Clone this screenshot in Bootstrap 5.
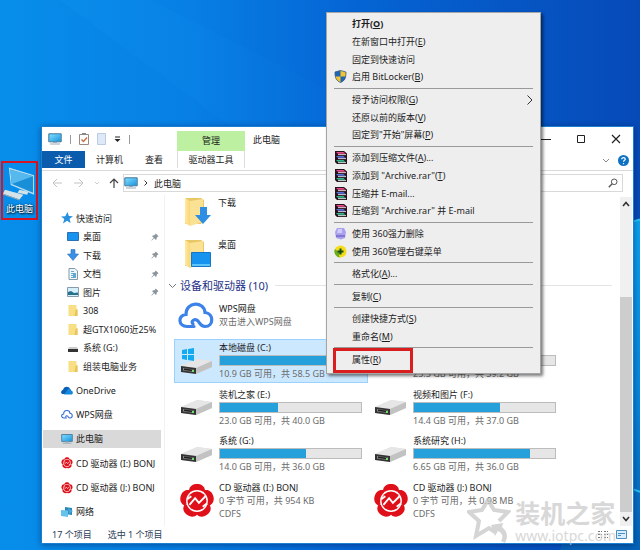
<!DOCTYPE html>
<html lang="zh-CN">
<head>
<meta charset="utf-8">
<meta name="viewport" content="width=device-width, initial-scale=1">
<title>此电脑</title>
<link href="https://cdn.jsdelivr.net/npm/bootstrap@5.3.0/dist/css/bootstrap.min.css" rel="stylesheet">
<style>
body{font-family:"Noto Sans","Noto Sans CJK SC",sans-serif;font-size:9px;line-height:13px;color:#1c1c1c;background:#0874d8;min-height:100vh}
button,input{font:inherit;color:inherit;border:0;background:none;padding:0}
a{color:inherit;text-decoration:none}
svg{display:block;flex:none}
.wallpaper{inset:0;width:100%;height:100%}
.shortcut{left:1px;top:161px;width:37px;border:2px solid #d51426;padding:4px 0 3px;color:#fff;text-shadow:1px 1px 2px #000,0 0 2px #0009}
.explorer{margin:126px 6px 7px 41px;border:1px solid #1a80cf;background:#fff;box-shadow:0 1px 6px #0036}
.titlebar{height:24px}
.quick{width:135px;gap:8px;padding-left:6px}
.quick-line{width:1px;height:9px;background:#999}
.tool-tab{width:68px;text-align:center}
.tool-head{background:#bdf0a0;height:20px;line-height:19px;margin-top:4px}
.window-buttons{gap:25px;padding-right:12px}
.ribbon{height:20px;border-bottom:1px solid #dadada}
.file-tab{background:#0c5cad;color:#fff;width:43px;height:17px}
.tab-pair{width:92px;padding:0 14px 0 11px}
.tool-name{border:solid #ddd;border-width:0 1px;height:17px;line-height:17px}
.address-row{height:24px;padding:3px 10px 3px 9px}
.box{border:1px solid #d9d9d9;height:18px}
.address{gap:6px}
.search{width:110px;margin-left:5px}
.search input{min-width:0}
.pane{height:331px}
.side{width:123px;padding-top:14px;border-right:1px solid #f2f2f2}
.quick-list{height:166px}
.root-list{height:140px;margin-top:6px}
.side a{display:flex;align-items:center;height:18px;padding-left:18px;gap:3px;margin:0 3px 0 1px;white-space:nowrap;overflow:hidden}
.side .sub{padding-left:24px;gap:4px}
.side .current{background:#d9d9d9}
.pin{margin-left:auto;margin-right:2px}
.folder{height:42px;padding-left:18px;padding-top:1px;gap:7px}
.folder svg{margin-top:1px}
.group-title{font-size:11px;line-height:13px;color:#1e3287;gap:3px;padding-left:3px}
.group-title::after{content:"";flex:1;height:1px;background:#e4e4e4;margin:0 8px 0 4px}
.wps{height:45px;padding:10px 0 0 13px;gap:5px}
.drives{display:grid;grid-template-columns:repeat(2,194px);grid-auto-rows:1fr;height:187px;padding-left:9px}
.drive{display:flex;align-items:center;padding-left:5px;gap:5px;border:1px solid transparent;white-space:nowrap}
.drive.selected{background:#cce8ff;border-color:#99d1ff;margin:2px 0 1px}
.disc{margin:0 -1px}
.drive-info{width:143px;flex:none}
.meter{height:11px;margin:1px 0;border:1px solid #bcbcbc;border-radius:0;background:#e6e6e6}
.meter .progress-bar{background:#26a0da}
.muted{color:#6b6b6b}
.scroll{width:12px;margin:2px 1px 0 0;background:#f0f0f0}
.thumb{background:#cdcdcd;height:215px}
.status{height:17px;padding:0 6px 0 10px;color:#2b3d56}
.menu{left:326px;top:12px;width:215px;min-height:362px;padding:2px 7px 5px;background:#eee;border:1px solid #a5a5a5;box-shadow:2px 2px 3px #0008;z-index:3}
.menu button{flex:18 1 0;display:flex;align-items:center;text-align:left;gap:5px;line-height:13px;white-space:nowrap}
.menu button .ico{width:13px;height:13px;flex:none}
.menu hr{flex:5 1 0;margin:0;border:0;opacity:1;background:linear-gradient(#999,#999) center/100% 1px no-repeat}
.target::after{content:"";position:absolute;left:-1px;top:-2px;width:80px;height:25px;border:3px solid #d81e1e}
.watermark{right:24px;bottom:7px;color:#c8c8c8;opacity:.7;z-index:2;pointer-events:none}
.mark-name{font-size:25px;line-height:29px;font-weight:700}
.mark-url{font-size:14px;line-height:15px}
</style>
<script src="https://cdn.jsdelivr.net/npm/bootstrap@5.3.0/dist/js/bootstrap.bundle.min.js"></script>
</head>
<body class="position-relative overflow-hidden">
<svg class="wallpaper position-absolute" viewBox="0 0 640 550" preserveAspectRatio="none" aria-hidden="true">
<defs>
<linearGradient id="sky"><stop offset="0" stop-color="#078eea"/><stop offset=".3" stop-color="#077fe4"/><stop offset=".55" stop-color="#0565d4"/><stop offset="1" stop-color="#064ab8"/></linearGradient>
<linearGradient id="low" x2="0" y2="1"><stop offset="0" stop-color="#0aa0ee"/><stop offset=".5" stop-color="#0788de"/><stop offset="1" stop-color="#0562b8"/></linearGradient>
<linearGradient id="beam"><stop offset="0" stop-color="#18a0f5" stop-opacity=".12"/><stop offset="1" stop-color="#18a0f5" stop-opacity="0"/></linearGradient>
</defs>
<path fill="url(#sky)" d="M0 0h640v550H0z"/>
<path fill="url(#beam)" d="M150 0L400 126H230L60 0z"/>
<path fill="url(#low)" d="M630 222l10-3v331H560z"/>
<path stroke="#25c5f5" stroke-width="2" d="M630 222l10-3M632 488l8 3"/>
</svg>

<svg width="0" height="0" class="position-absolute" aria-hidden="true">
<defs>
<linearGradient id="screen" x2="1" y2="1"><stop offset="0" stop-color="#7fdcff"/><stop offset="1" stop-color="#1c95dc"/></linearGradient>
<linearGradient id="foldface"><stop offset="0" stop-color="#ffe9a3"/><stop offset="1" stop-color="#f8d775"/></linearGradient>
</defs>
<symbol id="pc" viewBox="0 0 14 12"><path fill="#37aee8" stroke="#4a7795" d="M.8.8h12.4v8H.8z"/><path fill="url(#screen)" d="M1.500 1.500h11v6.700h-11z"/><path fill="#9ab" d="M5 9h4v1H5zM2 10.500h10v1H2z"/></symbol>
<symbol id="pinned" viewBox="0 0 9 9"><path fill="#8a949c" d="M5.300 .5l3.200 3.200-1 .5-1 1-.3 2-1 .4L3.600 5.900 1 8.400l-.5.1.1-.5 2.500-2.600L1.400 3.800l.4-1 2-.3 1-1z"/></symbol>
<symbol id="smallfolder" viewBox="0 0 11 13"><path fill="#f8df83" d="M1 1h8v4l1 1v6H1z"/><path fill="#e7c45c" d="M8 6l2-1v7H7z"/></symbol>
<symbol id="disk" viewBox="0 0 34 20"><path fill="#dcdcdc" d="M1 10L17 3l15 2v6l-16 7-15-2z"/><path fill="#e6e6e6" d="M1 10L17 3l15 2-16 7z"/><path fill="#c2c2c2" d="M16 12l16-7v6l-16 7z"/><path fill="#343434" d="M1 10l15 2v6L1 16z"/><path fill="#8a8a8a" d="M3 12l11 1.500v2.500L3 14.500z"/><path fill="#1e1e1e" d="M4 12.500l9 1.200v1.600l-9-1.200z"/><path fill="#6fe06a" d="M12 14h2v2h-2z"/></symbol>
<symbol id="rose" viewBox="0 0 38 38"><g fill="#df1019"><path id="petal" d="M10.500 8C11 3 15 1 19 1s8 2 8.500 7c-3 4-14 4-17 0z"/><use href="#petal" transform="rotate(72 19 19)"/><use href="#petal" transform="rotate(144 19 19)"/><use href="#petal" transform="rotate(216 19 19)"/><use href="#petal" transform="rotate(288 19 19)"/></g><circle cx="19" cy="19" r="11.500" fill="#fff"/><circle cx="19" cy="19" r="10" fill="#df1019"/><path fill="none" stroke="#fff" stroke-width="2" d="M11 23l6-7 4 5 7-7M9 17l4-3M25 25l4-3"/></symbol>
<symbol id="cloud" viewBox="0 0 36 28"><path fill="none" stroke="currentColor" stroke-width="3.200" stroke-linecap="round" d="M16 24.500H9C0 24.500-.5 13 8 12.500 8-1 26-1 27 10.500c9 1 9 14 0 14-4 0-5-3-7-5.500-3-3-8 0-5 3"/></symbol>
<symbol id="books" viewBox="0 0 13 13"><path fill="#28111d" d="M1 0h9l3 2.500V13H3l-2-2z"/><path fill="#e64b8c" d="M2 1h7.500l2 1.800H4z"/><path fill="#f4dce6" d="M4 3.200h8v.9H4z"/><path fill="#5570d8" d="M2 5h7.500l2 1.800H4z"/><path fill="#dce4f8" d="M4 7.200h8v.9H4z"/><path fill="#30b88c" d="M2 9h7.500l2 1.800H4z"/><path fill="#daf4ea" d="M4 11.200h8v.9H4z"/></symbol>
<symbol id="bigfolder" viewBox="0 0 30 30"><path fill="#e9c766" d="M2 1h16l3 2v20l-3 4H2z"/><path fill="url(#foldface)" d="M2 1l5 3v25l-5-3z"/><path fill="#fbe194" d="M7 4l13-2v23L7 29z"/></symbol>
</svg>

<a href="#" class="shortcut position-absolute d-flex flex-column align-items-center">
<svg width="33" height="35" viewBox="0 0 34 35"><path fill="#b9dff2" d="M6 0l26 8v20L8 18z"/><path fill="#198fd8" d="M7.500 2L31 9v17L9 17z"/><path fill="#55b9ee" d="M7.500 2L31 9 9 17z"/><path fill="#d5e2e8" d="M17 23l9 2-1 3-10-2zM2 23l19 5-4 5L0 27z"/><path fill="#97a7ae" d="M0 27l17 6v1L0 28z"/></svg>
<span>此电脑</span></a>

<main class="explorer position-relative">
<header class="titlebar d-flex align-items-start">
<div class="quick d-flex align-items-center h-100">
<svg width="14" height="12"><use href="#pc"/></svg><span class="quick-line"></span>
<svg width="10" height="12" viewBox="0 0 10 12"><path fill="#fff" stroke="#9a8a80" d="M.5 1.500h9v10h-9z"/><path fill="#888" d="M3 0h4v2H3z"/><path fill="none" stroke="#c66a3c" stroke-width="1.300" d="M2.500 6.500l2 2 3.500-4"/></svg>
<svg width="9" height="12" viewBox="0 0 9 12"><path fill="#dfe8f7" stroke="#bccbe4" d="M.5.5h8v11h-8z"/></svg>
<svg width="7" height="7" viewBox="0 0 7 7"><path stroke="#222" d="M1 1h5"/><path fill="#222" d="M.5 3h6l-3 3z"/></svg><span class="quick-line"></span>
</div>
<div class="tool-tab tool-head">管理</div>
<div class="align-self-center ps-2">此电脑</div>
<div class="window-buttons d-flex align-items-center h-100 ms-auto">
<button aria-label="最小化"><svg width="10" height="10" viewBox="0 0 10 10"><path stroke="#222" d="M0 5.500h10"/></svg></button>
<button aria-label="最大化"><svg width="10" height="10" viewBox="0 0 10 10"><path fill="none" stroke="#222" d="M1.500 1.500h7v7h-7z"/></svg></button>
<button aria-label="关闭"><svg width="10" height="10" viewBox="0 0 10 10"><path stroke="#222" stroke-width="1.200" d="M1 1l8 8M9 1L1 9"/></svg></button>
</div>
</header>
<nav class="ribbon d-flex align-items-start" aria-label="功能区">
<button class="file-tab">文件</button>
<div class="tab-pair d-flex justify-content-between"><button class="pt-1 lh-1">计算机</button><button class="pt-1 lh-1">查看</button></div>
<button class="tool-tab tool-name">驱动器工具</button>
<div class="ms-auto d-flex align-items-center gap-2 h-100 pe-1">
<svg width="8" height="6" viewBox="0 0 8 6"><path fill="none" stroke="#888" d="M1 1l3 3 3-3"/></svg>
<button aria-label="帮助"><svg width="11" height="11" viewBox="0 0 11 11"><circle cx="5.500" cy="5.500" r="5.500" fill="#0d72c4"/><path fill="none" stroke="#fff" stroke-width="1.200" d="M3.700 4.200c0-2.200 3.600-2 3.600 0 0 1-1.800 1.300-1.800 2.600M5.500 8v1.200"/></svg></button>
</div>
</nav>
<div class="address-row d-flex align-items-center">
<div class="d-flex align-items-center gap-2 flex-shrink-0">
<svg width="12" height="10" viewBox="0 0 12 10"><path fill="none" stroke="#c4c4c4" d="M11 5H2M6 1L2 5l4 4"/></svg>
<svg width="14" height="10" viewBox="0 0 14 10"><path fill="none" stroke="#c4c4c4" d="M3 5h9M8 1l4 4-4 4"/></svg>
<svg width="8" height="5" viewBox="0 0 8 5"><path fill="none" stroke="#ccc" d="M2 1l2 2 2-2"/></svg>
<svg width="10" height="10" viewBox="0 0 10 10"><path fill="none" stroke="#444" stroke-width="1.200" d="M5 10V1M1 5l4-4 4 4"/></svg>
</div>
<div class="box address d-flex align-items-center flex-grow-1 ms-1">
<svg width="14" height="12"><use href="#pc"/></svg>
<svg width="4" height="6" viewBox="0 0 4 6"><path fill="none" stroke="#333" d="M.5.5L3 3 .5 5.500"/></svg>
<a href="#">此电脑</a></div>
<label class="box search d-flex align-items-center pe-1"><input class="flex-grow-1" type="search" aria-label="搜索此电脑"><svg width="10" height="10" viewBox="0 0 10 10"><circle cx="6.200" cy="3.800" r="2.800" fill="none" stroke="#555"/><path stroke="#555" stroke-width="1.400" d="M4.200 5.800L.8 9.200"/></svg></label>
</div>
<div class="pane d-flex">
<nav class="side flex-shrink-0" aria-label="导航窗格">
<div class="quick-list d-flex flex-column justify-content-between">
<a href="#"><svg width="12" height="12" viewBox="0 0 12 12"><path fill="#2790df" d="M6.500 0l1.300 4 4.200.3-3.400 2.500 1 4.200L6 8.800 2 11.500l1.300-4.400L0 4.600l4.300-.3z"/></svg>快速访问</a>
<a href="#" class="sub"><svg width="12" height="10" viewBox="0 0 12 10"><path fill="#1593ef" stroke="#2a70b4" d="M.5.5h11v8H.5z"/></svg>桌面<svg class="pin" width="8" height="8"><use href="#pinned"/></svg></a>
<a href="#" class="sub"><svg width="12" height="12" viewBox="0 0 12 12"><path fill="#3a90e4" stroke="#2870bf" stroke-width=".6" d="M4 .5h4V5h3.500L6 11.500.5 5H4z"/></svg>下载<svg class="pin" width="8" height="8"><use href="#pinned"/></svg></a>
<a href="#" class="sub"><svg width="12" height="12" viewBox="0 0 12 12"><path fill="#f0f7fb" stroke="#8199aa" d="M2 .5h6l2.500 2.500v8.500H2z"/><path stroke="#65a8d0" d="M4 3.500h3M4 5.500h5M4 7.500h5M4 9.500h5"/><path fill="#60a8d5" d="M6 5h3v4H6z"/></svg>文档<svg class="pin" width="8" height="8"><use href="#pinned"/></svg></a>
<a href="#" class="sub"><svg width="12" height="10" viewBox="0 0 12 10"><path fill="#d5effc" stroke="#879ba8" d="M.5.5h11v9H.5z"/><path fill="#26728b" d="M1 5l3-1 3 2 4-.5V8H1z"/></svg>图片<svg class="pin" width="8" height="8"><use href="#pinned"/></svg></a>
<a href="#" class="sub"><svg width="12" height="13"><use href="#smallfolder"/></svg>308</a>
<a href="#" class="sub"><svg width="12" height="13"><use href="#smallfolder"/></svg>超GTX1060近25%</a>
<a href="#" class="sub"><svg width="12" height="10" viewBox="0 0 12 10"><path fill="#ccc" d="M2 4h8l1 2H1z"/><path fill="#333" d="M1 6h10v3H1z"/></svg>系统 (G:)</a>
<a href="#" class="sub"><svg width="12" height="13"><use href="#smallfolder"/></svg>组装电脑业务</a>
</div>
<div class="root-list d-flex flex-column justify-content-between">
<a href="#"><svg width="12" height="9" viewBox="0 0 12 9"><path fill="#0a5eb5" d="M2 4c.5-4 6-4.500 7-1l-5 5H2C-.5 8-.5 4.500 2 4z"/><path fill="#1489dc" d="M3 8.500L7 3c3-1 3 1 3 1.500 2.500.5 2.500 4 0 4z"/></svg>OneDrive</a>
<a href="#"><svg width="12" height="11" color="#386bd6"><use href="#cloud"/></svg>WPS网盘</a>
<a href="#" class="current"><svg width="12" height="12"><use href="#pc"/></svg>此电脑</a>
<a href="#"><svg width="12" height="12"><use href="#rose"/></svg>CD 驱动器 (I:) BONJ</a>
<a href="#"><svg width="12" height="12"><use href="#rose"/></svg>CD 驱动器 (J:) BONJ</a>
<a href="#"><svg width="12" height="12" viewBox="0 0 12 12"><path fill="#2987b8" d="M4 1l7 1v7l-7-1z"/><path fill="#64c3ec" d="M0 4l7 .5V11l-7-1z"/><path fill="#4aa7d2" d="M7 2l5 3-4 3z"/></svg>网络</a>
</div>
</nav>
<section class="flex-grow-1 overflow-hidden" aria-label="文件">
<div class="folder d-flex align-items-start"><svg width="28" height="30" viewBox="0 0 28 30"><use href="#bigfolder" width="30" height="30"/><path fill="#2d8ee4" d="M17 10h7v8h4l-8 9-8-9h5z"/></svg><a href="#">下载</a></div>
<div class="folder d-flex align-items-start"><svg width="28" height="30" viewBox="0 0 28 30"><use href="#bigfolder" width="30" height="30"/><path fill="#1593ef" stroke="#1376c6" d="M8.500 13.500h19v14h-19z"/><path fill="#5cc4f8" d="M9 25h18v2H9z"/></svg><a href="#">桌面</a></div>
<h2 class="group-title d-flex align-items-center m-0 fw-normal"><svg width="9" height="6" viewBox="0 0 9 6"><path fill="none" stroke="#777" d="M1 1l3.500 3.500L8 1"/></svg>设备和驱动器 (10)</h2>
<div class="wps d-flex"><svg width="36" height="28" color="#3c82e8"><use href="#cloud"/></svg><div><div>WPS网盘</div><div class="muted">双击进入WPS网盘</div></div></div>
<div class="drives">
<div class="drive selected"><svg width="34" height="28" viewBox="0 0 34 28"><use href="#disk" y="9" width="34" height="20"/><path fill="#12aaf0" d="M2 3l5-1v5H2zM8 2l6-1v6H8zM2 8h5v5l-5-1zM8 8h6v6l-6-1z"/></svg><div class="drive-info"><div>本地磁盘 (C:)</div><div class="meter progress"><div class="progress-bar" style="width:81%"></div></div><div class="muted">10.9 GB 可用，共 58.5 GB</div></div></div>
<div class="drive"><svg width="34" height="20"><use href="#disk"/></svg><div class="drive-info"><div>娱乐 (D:)</div><div class="meter progress"><div class="progress-bar" style="width:41%"></div></div><div class="muted">23.3 GB 可用，共 39.2 GB</div></div></div>
<div class="drive"><svg width="34" height="20"><use href="#disk"/></svg><div class="drive-info"><div>装机之家 (E:)</div><div class="meter progress"><div class="progress-bar" style="width:41%"></div></div><div class="muted">23.0 GB 可用，共 40.0 GB</div></div></div>
<div class="drive"><svg width="34" height="20"><use href="#disk"/></svg><div class="drive-info"><div>视频和图片 (F:)</div><div class="meter progress"><div class="progress-bar" style="width:61%"></div></div><div class="muted">14.4 GB 可用，共 37.0 GB</div></div></div>
<div class="drive"><svg width="34" height="20"><use href="#disk"/></svg><div class="drive-info"><div>系统 (G:)</div><div class="meter progress"><div class="progress-bar" style="width:61%"></div></div><div class="muted">14.0 GB 可用，共 36.0 GB</div></div></div>
<div class="drive"><svg width="34" height="20"><use href="#disk"/></svg><div class="drive-info"><div>系统研究 (H:)</div><div class="meter progress"><div class="progress-bar" style="width:82%"></div></div><div class="muted">6.65 GB 可用，共 36.0 GB</div></div></div>
<div class="drive"><svg class="disc" width="36" height="36"><use href="#rose"/></svg><div class="drive-info"><div>CD 驱动器 (I:) BONJ</div><div class="muted">0 字节 可用，共 954 KB</div><div class="muted">CDFS</div></div></div>
<div class="drive"><svg class="disc" width="36" height="36"><use href="#rose"/></svg><div class="drive-info"><div>CD 驱动器 (J:) BONJ</div><div class="muted">0 字节 可用，共 0.98 MB</div><div class="muted">CDFS</div></div></div>
</div>
</section>
<div class="scroll d-flex flex-column align-items-center pt-1 pb-1 flex-shrink-0">
<svg width="8" height="6" viewBox="0 0 8 6"><path fill="none" stroke="#333" stroke-width="1.600" d="M1 5l3-3.500L7 5"/></svg>
<div class="thumb w-100 mt-auto mb-1"></div>
<svg width="8" height="6" viewBox="0 0 8 6"><path fill="none" stroke="#333" stroke-width="1.600" d="M1 1l3 3.500L7 1"/></svg>
</div>
</div>
<footer class="status d-flex align-items-center gap-3"><span>17 个项目</span><span>选中 1 个项目</span>
<span class="ms-auto d-flex gap-2"><svg width="10" height="9" viewBox="0 0 10 9"><path stroke="#777" stroke-dasharray="2 1" d="M0 1.500h4M6 1.500h4M0 4.500h4M6 4.500h4M0 7.500h4M6 7.500h4"/></svg><svg width="11" height="9" viewBox="0 0 11 9"><path fill="#d9efff" stroke="#4c8fc4" d="M.5.500h10v8H.5z"/><path stroke="#4c8fc4" d="M2 3.500h7M2 5.500h3"/></svg></span>
</footer>
</main>

<div class="watermark position-absolute d-flex align-items-center gap-1" aria-hidden="true">
<svg width="44" height="46" viewBox="0 0 44 46"><path fill="none" stroke="#c4c4c4" stroke-width="4" d="M28 34l-6-4-13 8 3-15L2 14l13-2 6-10 6 10 14 2-9 9"/><path fill="#c4c4c4" d="M24 27l12-2-1 4c6 5 6 10 3 16l-4-2c3-5 1-8-3-10l-3 5z"/></svg>
<div><div class="mark-name">装机之家</div><div class="mark-url">www.iotpc.com</div></div></div>

<div class="menu position-absolute d-flex flex-column" role="menu">
<button role="menuitem" class="fw-bold"><span class="ico"></span><span>打开(<u>O</u>)</span></button>
<button role="menuitem"><span class="ico"></span><span>在新窗口中打开(<u>E</u>)</span></button>
<button role="menuitem"><span class="ico"></span><span>固定到快速访问</span></button>
<button role="menuitem"><svg class="ico" viewBox="0 0 13 13"><path fill="#f4c430" d="M6.500.5L12 2c0 6-1 8.500-5.500 10.500C2 10.500 1 8 1 2z"/><path fill="#2065b5" d="M6.500.5v6H1.300C1 5 1 3.500 1 2zM6.500 6.500h5.200c-.5 3-2 4.800-5.200 6z"/><path fill="none" stroke="#355c86" stroke-width=".8" d="M6.500.5L12 2c0 6-1 8.500-5.500 10.500C2 10.500 1 8 1 2z"/></svg><span>启用 BitLocker(<u>B</u>)</span></button>
<hr>
<button role="menuitem"><span class="ico"></span><span>授予访问权限(<u>G</u>)</span><svg class="ms-auto" width="6" height="10" viewBox="0 0 6 10"><path fill="none" stroke="#333" d="M.5.500L5 5 .5 9.500"/></svg></button>
<button role="menuitem"><span class="ico"></span><span>还原以前的版本(<u>V</u>)</span></button>
<button role="menuitem"><span class="ico"></span><span>固定到"开始"屏幕(<u>P</u>)</span></button>
<hr>
<button role="menuitem"><svg class="ico"><use href="#books"/></svg><span>添加到压缩文件(<u>A</u>)...</span></button>
<button role="menuitem"><svg class="ico"><use href="#books"/></svg><span>添加到 "Archive.rar"(<u>T</u>)</span></button>
<button role="menuitem"><svg class="ico"><use href="#books"/></svg><span>压缩并 E-mail...</span></button>
<button role="menuitem"><svg class="ico"><use href="#books"/></svg><span>压缩到 "Archive.rar" 并 E-mail</span></button>
<hr>
<button role="menuitem"><svg class="ico" viewBox="0 0 13 13"><path fill="#aaa1ee" d="M3 1h7l2 4-1 6-4 1.500L2 11 1 5z"/><path fill="#d1cbff" d="M4 2h4v4H3z"/><path fill="#8076cf" d="M2 8h9v2H2z"/></svg><span>使用 360强力删除</span></button>
<button role="menuitem"><svg class="ico" viewBox="0 0 13 13"><circle cx="6.500" cy="6.500" r="6" fill="#f5dc19"/><path fill="#65ae20" d="M1 4a6 6 0 005 8.500C4 10 5 8 9 8 5 7 3 6 1 4z"/><path stroke="#164c16" stroke-width="2" d="M6.500 3.500v6M3.500 6.500h6"/></svg><span>使用 360管理右键菜单</span></button>
<hr>
<button role="menuitem"><span class="ico"></span><span>格式化(<u>A</u>)...</span></button>
<hr>
<button role="menuitem"><span class="ico"></span><span>复制(<u>C</u>)</span></button>
<hr>
<button role="menuitem"><span class="ico"></span><span>创建快捷方式(<u>S</u>)</span></button>
<button role="menuitem"><span class="ico"></span><span>重命名(<u>M</u>)</span></button>
<hr>
<button role="menuitem" class="target position-relative"><span class="ico"></span><span>属性(<u>R</u>)</span></button>
</div>
</body>
</html>
